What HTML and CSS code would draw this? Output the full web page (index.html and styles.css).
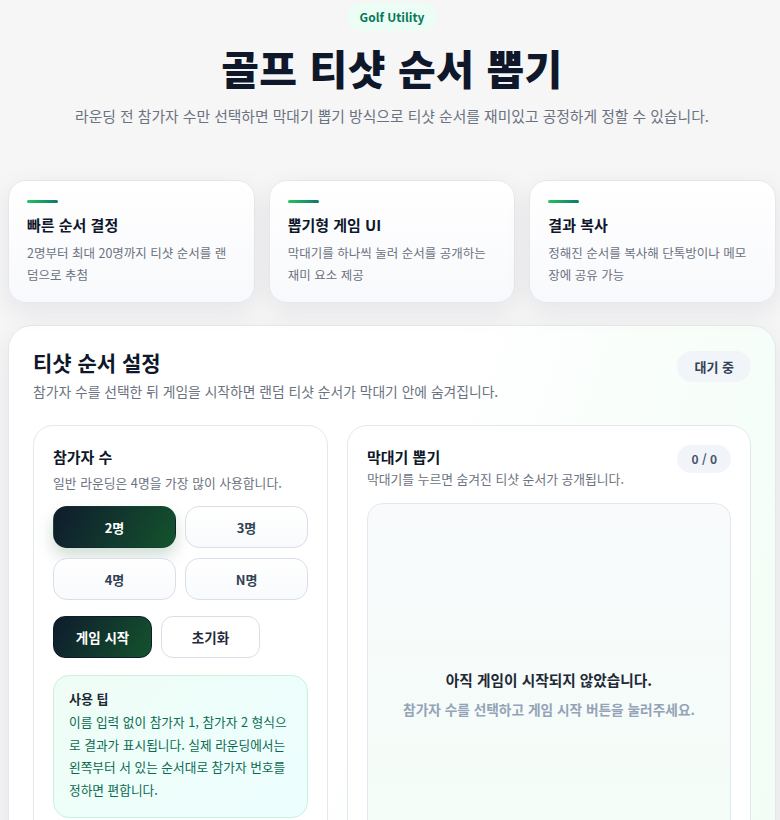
FILE: index.html
```html
<!DOCTYPE html>
<html lang="ko">
<head>
  <meta charset="utf-8">
  <title>골프 티샷 순서 뽑기</title>
  <meta name="viewport" content="width=device-width, initial-scale=1.0">
  <link rel="stylesheet" href="styles.css">
</head>
<body>
  <div class="wrap">
    <header class="hero">
      <span class="badge">Golf Utility</span>
      <h1>골프 티샷 순서 뽑기</h1>
      <p>라운딩 전 참가자 수만 선택하면 막대기 뽑기 방식으로 티샷 순서를 재미있고 공정하게 정할 수 있습니다.</p>
    </header>

    <section class="features">
      <div class="feature">
        <i class="bar"></i>
        <h3>빠른 순서 결정</h3>
        <p>2명부터 최대 20명까지 티샷 순서를 랜덤으로 추첨</p>
      </div>
      <div class="feature">
        <i class="bar"></i>
        <h3>뽑기형 게임 UI</h3>
        <p>막대기를 하나씩 눌러 순서를 공개하는 재미 요소 제공</p>
      </div>
      <div class="feature">
        <i class="bar"></i>
        <h3>결과 복사</h3>
        <p>정해진 순서를 복사해 단톡방이나 메모장에 공유 가능</p>
      </div>
    </section>

    <section class="panel">
      <div class="panel-head">
        <div>
          <h2>티샷 순서 설정</h2>
          <p>참가자 수를 선택한 뒤 게임을 시작하면 랜덤 티샷 순서가 막대기 안에 숨겨집니다.</p>
        </div>
        <span class="status">대기 중</span>
      </div>

      <div class="grid">
        <div class="card setup">
          <h3>참가자 수</h3>
          <p class="sub">일반 라운딩은 4명을 가장 많이 사용합니다.</p>
          <div class="counts">
            <button class="count selected">2명</button>
            <button class="count">3명</button>
            <button class="count">4명</button>
            <button class="count">N명</button>
          </div>
          <div class="actions">
            <button class="primary">게임 시작</button>
            <button class="ghost">초기화</button>
          </div>
          <div class="tip">
            <strong>사용 팁</strong>
            <p>이름 입력 없이 참가자 1, 참가자 2 형식으로 결과가 표시됩니다. 실제 라운딩에서는 왼쪽부터 서 있는 순서대로 참가자 번호를 정하면 편합니다.</p>
          </div>
        </div>

        <div class="card draw">
          <div class="draw-head">
            <div>
              <h3>막대기 뽑기</h3>
              <p class="sub">막대기를 누르면 숨겨진 티샷 순서가 공개됩니다.</p>
            </div>
            <span class="counter">0 / 0</span>
          </div>
          <div class="sticks">
            <strong>아직 게임이 시작되지 않았습니다.</strong>
            <span>참가자 수를 선택하고 게임 시작 버튼을 눌러주세요.</span>
          </div>
        </div>
      </div>
    </section>
  </div>
</body>
</html>
```

FILE: styles.css
```css
body {
  margin: 0;
  background: #f6f6f7;
  font-family: "Noto Sans CJK KR", "Noto Sans", sans-serif;
  color: #0f172a;
}
h1, h2, h3, p { margin: 0; }
button { font-family: inherit; cursor: pointer; }

.wrap { padding: 3px 4px 0 8px; }

.hero { text-align: center; }
.badge {
  display: inline-block;
  padding: 5px 13px;
  border-radius: 14px;
  background: #ecfdf5;
  color: #047857;
  font-size: 12px;
  font-weight: 700;
  line-height: 18px;
}
.hero h1 {
  margin-top: 8px;
  font-size: 41px;
  font-weight: 900;
  line-height: 56px;
  letter-spacing: 0.5px;
}
.hero p {
  margin-top: 10px;
  font-size: 14.8px;
  line-height: 22px;
  color: #6b7280;
}

.features {
  display: grid;
  grid-template-columns: repeat(3, 1fr);
  gap: 14px;
  margin-top: 53px;
}
.feature {
  height: 123px;
  box-sizing: border-box;
  padding: 19px 18px;
  background: linear-gradient(180deg, #ffffff, #f8f9fc);
  border: 1px solid #e5e7eb;
  border-radius: 18px;
  box-shadow: 0 8px 26px rgba(15, 23, 42, 0.08);
}
.feature .bar {
  display: block;
  width: 31px;
  height: 3px;
  border-radius: 2px;
  background: linear-gradient(90deg, #22c55e, #0f766e);
}
.feature h3 {
  margin-top: 12px;
  font-size: 15px;
  font-weight: 700;
  line-height: 20px;
}
.feature p {
  margin-top: 7px;
  font-size: 12.5px;
  line-height: 22px;
  color: #6b7280;
}

.panel {
  margin-top: 22px;
  padding: 22px 24px 30px;
  border: 1px solid #e5e7eb;
  border-radius: 24px;
  background: linear-gradient(110deg, #ffffff 45%, #f0fdf4 100%);
  box-shadow: 0 10px 30px rgba(15, 23, 42, 0.08);
}
.panel-head {
  display: flex;
  justify-content: space-between;
  align-items: flex-start;
}
.panel-head h2 {
  font-size: 21px;
  font-weight: 700;
  line-height: 28px;
}
.panel-head p {
  margin-top: 5px;
  font-size: 13.8px;
  line-height: 20px;
  color: #6b7280;
}
.status {
  margin-top: 3px;
  padding: 6px 17px;
  border-radius: 16px;
  background: #f1f5f9;
  color: #334155;
  font-size: 13px;
  font-weight: 700;
  line-height: 19px;
}

.grid {
  display: grid;
  grid-template-columns: 295px 1fr;
  gap: 19px;
  margin-top: 24px;
}
.card {
  background: #ffffff;
  border: 1px solid #e2e8f0;
  border-radius: 20px;
  padding: 20px 19px 14px;
}
.card h3 {
  font-size: 15px;
  font-weight: 700;
  line-height: 22px;
}
.card .sub {
  margin-top: 5px;
  font-size: 12.8px;
  line-height: 19px;
  color: #6b7280;
}

.counts {
  display: grid;
  grid-template-columns: 1fr 1fr;
  gap: 10px 9px;
  margin-top: 14px;
}
.count {
  height: 42px;
  border: 1px solid #d9dee8;
  border-radius: 14px;
  background: linear-gradient(180deg, #ffffff, #f8fafc);
  color: #334155;
  font-size: 13px;
  font-weight: 700;
}
.count.selected {
  border-color: transparent;
  background: linear-gradient(120deg, #0f1b2d, #14532d);
  color: #ffffff;
  box-shadow: 0 8px 16px rgba(20, 83, 45, 0.2);
}

.actions {
  display: flex;
  gap: 9px;
  margin-top: 16px;
}
.actions button {
  width: 99px;
  height: 42px;
  border-radius: 12px;
  font-size: 13.5px;
  font-weight: 700;
}
.primary {
  border: 1px solid #0f1b2d;
  background: linear-gradient(120deg, #0f1b2d, #14532d);
  color: #ffffff;
}
.ghost {
  border: 1px solid #d9dee8;
  background: #ffffff;
  color: #1f2937;
}

.tip {
  margin-top: 17px;
  padding: 13px 15px 15px;
  border: 1px solid #c9f2dc;
  border-radius: 16px;
  background: linear-gradient(135deg, #effdf5, #ecfeff);
}
.tip strong {
  display: block;
  font-size: 13px;
  line-height: 20px;
  color: #1f2937;
}
.tip p {
  margin-top: 2px;
  font-size: 12.7px;
  line-height: 22.7px;
  color: #0b6b52;
}

.draw-head {
  display: flex;
  justify-content: space-between;
  align-items: flex-start;
}
.draw .sub { margin-top: 1px; }
.counter {
  margin-top: -1px;
  padding: 4px 14px;
  border-radius: 14px;
  background: #f1f5f9;
  color: #475569;
  font-size: 12px;
  font-weight: 700;
  line-height: 20px;
}
.sticks {
  display: flex;
  flex-direction: column;
  align-items: center;
  justify-content: center;
  gap: 9px;
  margin-top: 15px;
  min-height: 380px;
  border: 1px solid #e2e8f0;
  border-radius: 16px;
  background: linear-gradient(180deg, #f8fafc, #f3fdf6);
  text-align: center;
}
.sticks strong {
  font-size: 14.7px;
  line-height: 20px;
  color: #1f2937;
}
.sticks span {
  font-size: 13.7px;
  font-weight: 700;
  line-height: 20px;
  color: #94a3b8;
}
```
